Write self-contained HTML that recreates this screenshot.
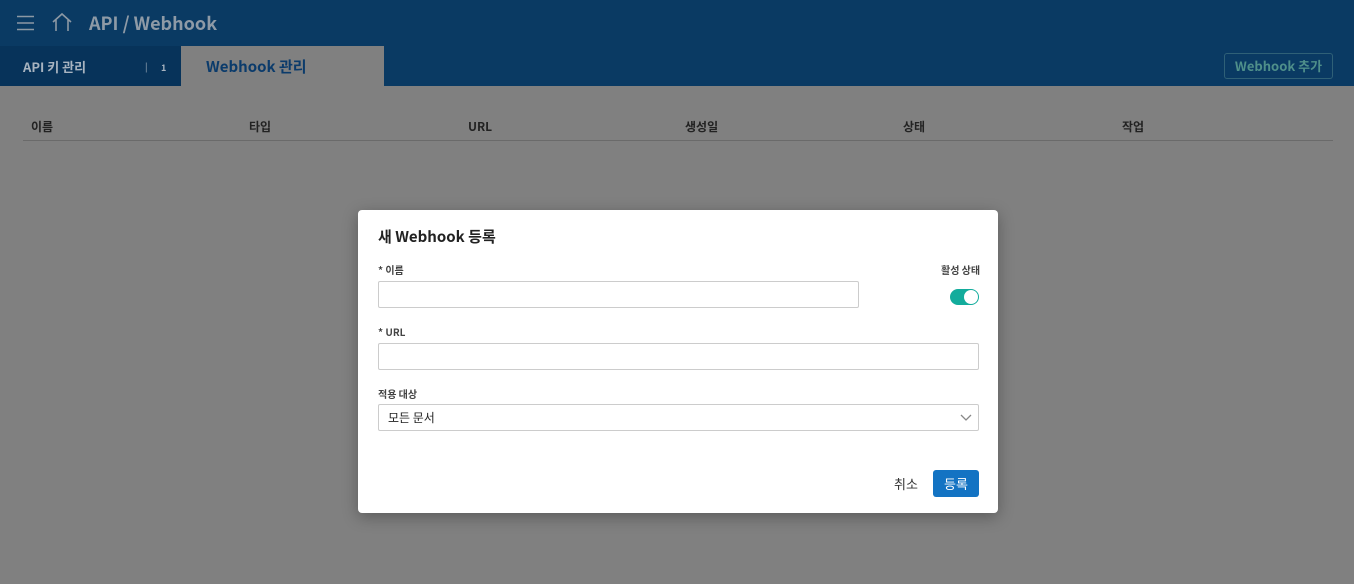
<!DOCTYPE html>
<html><head><meta charset="utf-8"><style>
*{box-sizing:border-box;margin:0;padding:0}
body{width:1354px;height:584px;background:#808080;font-family:"Noto Sans CJK KR","Liberation Sans",sans-serif;position:relative;overflow:hidden;line-height:1}
.hdr{position:absolute;left:0;top:0;width:1354px;height:46px;background:#0a3a63}
.tabs{position:absolute;left:0;top:46px;width:1354px;height:40px;background:#0a3a63}
.t1{position:absolute;left:0;top:0;width:181px;height:40px;background:#07335a;color:#a8b4c0;font-size:13px;font-weight:bold}
.t2{position:absolute;left:181px;top:0;width:203px;height:40px;background:#808080;color:#0b3b6b;font-size:15px;font-weight:bold;padding:13px 0 0 25px}
.btn{position:absolute;left:1224px;top:7px;width:109px;height:26px;border:1px solid #2f6077;border-radius:3px;color:#4f8f8a;font-size:13px;font-weight:bold;text-align:center;line-height:24px}
.th{position:absolute;top:121px;font-size:12px;font-weight:bold;color:#222}
.line{position:absolute;left:23px;top:140px;width:1310px;height:1px;background:#6a6a6a}
.modal{position:absolute;left:358px;top:210px;width:640px;height:303px;background:#fff;border-radius:4px;box-shadow:0 4px 16px rgba(0,0,0,.3)}
.modal .a{position:absolute}
.lbl{font-size:10px;font-weight:bold;color:#444}
.inp{border:1px solid #ccc;border-radius:2px;height:27px}
</style></head><body>
<div class="hdr">
<svg style="position:absolute;left:17px;top:15px" width="18" height="16"><path d="M0 1.5H17M0 8H17M0 14.5H17" stroke="#8c98a4" stroke-width="1.5"/></svg>
<svg style="position:absolute;left:51px;top:12px" width="22" height="20"><path d="M2 10L11 2L20 10M5 8V19M17 8V19" stroke="#8c98a4" stroke-width="1.6" fill="none"/></svg>
<div style="position:absolute;left:89px;top:14px;font-size:18px;font-weight:bold;color:#8e9aa6">API / Webhook</div>
</div>
<div class="tabs">
<div class="t1"><span style="position:absolute;left:23px;top:14px">API 키 관리</span><span style="position:absolute;left:145px;top:16px;font-size:9px;font-weight:normal">|</span><span style="position:absolute;left:161px;top:17px;font-size:9px">1</span></div>
<div class="t2">Webhook 관리</div>
<div class="btn">Webhook 추가</div>
</div>
<div class="th" style="left:31px">이름</div>
<div class="th" style="left:249px">타입</div>
<div class="th" style="left:468px">URL</div>
<div class="th" style="left:685px">생성일</div>
<div class="th" style="left:903px">상태</div>
<div class="th" style="left:1122px">작업</div>
<div class="line"></div>
<div class="modal">
<div class="a" style="left:20px;top:19px;font-size:15px;font-weight:bold;color:#222">새 Webhook 등록</div>
<div class="a lbl" style="left:20px;top:55px">* 이름</div>
<div class="a lbl" style="left:583px;top:55px">활성 상태</div>
<div class="a inp" style="left:20px;top:71px;width:481px"></div>
<div class="a" style="left:592px;top:79px;width:29px;height:16px;border-radius:8px;background:#13ac9c"><div style="position:absolute;right:1px;top:1px;width:14px;height:14px;border-radius:50%;background:#fff"></div></div>
<div class="a lbl" style="left:20px;top:117px">* URL</div>
<div class="a inp" style="left:20px;top:133px;width:601px"></div>
<div class="a lbl" style="left:20px;top:179px">적용 대상</div>
<div class="a inp" style="left:20px;top:194px;width:601px"><span style="position:absolute;left:9px;top:7px;font-size:12px;color:#222">모든 문서</span>
<svg style="position:absolute;right:6px;top:9px" width="12" height="8"><path d="M1 1L6 6L11 1" stroke="#888" stroke-width="1.3" fill="none"/></svg></div>
<div class="a" style="left:536px;top:267px;font-size:13px;color:#333">취소</div>
<div class="a" style="left:575px;top:260px;width:46px;height:27px;background:#1373c3;border-radius:3px;color:#fff;font-size:13px;text-align:center;line-height:27px">등록</div>
</div>
</body></html>
